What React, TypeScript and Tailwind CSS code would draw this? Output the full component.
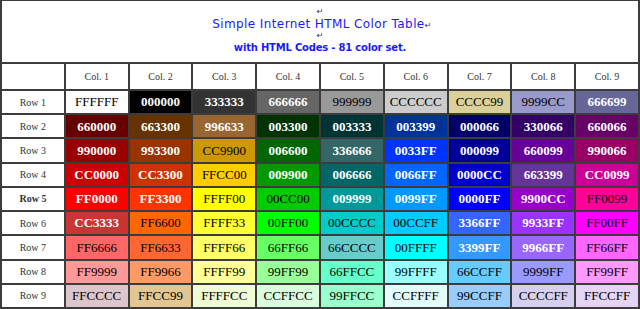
import React from 'react'

// 81 web colours, row by row; the flag marks cells that carry white text
const ROWS: [string, boolean][][] = [
  [['FFFFFF', false], ['000000', true], ['333333', true], ['666666', true], ['999999', false], ['CCCCCC', false], ['CCCC99', false], ['9999CC', false], ['666699', true]],
  [['660000', true], ['663300', true], ['996633', true], ['003300', true], ['003333', true], ['003399', true], ['000066', true], ['330066', true], ['660066', true]],
  [['990000', true], ['993300', true], ['CC9900', false], ['006600', true], ['336666', true], ['0033FF', true], ['000099', true], ['660099', true], ['990066', true]],
  [['CC0000', true], ['CC3300', true], ['FFCC00', false], ['009900', true], ['006666', true], ['0066FF', true], ['0000CC', true], ['663399', true], ['CC0099', true]],
  [['FF0000', true], ['FF3300', true], ['FFFF00', false], ['00CC00', false], ['009999', true], ['0099FF', true], ['0000FF', true], ['9900CC', true], ['FF0099', false]],
  [['CC3333', true], ['FF6600', false], ['FFFF33', false], ['00FF00', false], ['00CCCC', false], ['00CCFF', false], ['3366FF', true], ['9933FF', true], ['FF00FF', false]],
  [['FF6666', false], ['FF6633', false], ['FFFF66', false], ['66FF66', false], ['66CCCC', false], ['00FFFF', false], ['3399FF', true], ['9966FF', true], ['FF66FF', false]],
  [['FF9999', false], ['FF9966', false], ['FFFF99', false], ['99FF99', false], ['66FFCC', false], ['99FFFF', false], ['66CCFF', false], ['9999FF', false], ['FF99FF', false]],
  [['FFCCCC', false], ['FFCC99', false], ['FFFFCC', false], ['CCFFCC', false], ['99FFCC', false], ['CCFFFF', false], ['99CCFF', false], ['CCCCFF', false], ['FFCCFF', false]],
]

// the screenshot's palette shifts a few pale tones
const SHOWN: Record<string, string> = {
  CCCC99: '#dbd09a',
  FFCCCC: '#dcc6cb',
  FFCC99: '#e3c792',
  FFFFCC: '#effcd5',
  CCFFCC: '#dcfce0',
  CCFFFF: '#e2fcfc',
  CCCCFF: '#d6d0ee',
  FFCCFF: '#e6d4f4',
}

const serif = "font-['Liberation_Serif',serif]"

function Mark() {
  return <span className="text-[8px] leading-none text-[#333]">↵</span>
}

export default function App() {
  return (
    <div className="w-[640px] h-[309px] bg-[#3c3c3c] pt-px px-[2px] pb-[2px] flex flex-col gap-[2px] overflow-hidden">
      <div className="h-[61px] bg-white flex flex-col items-center justify-center font-['DejaVu_Sans',sans-serif] text-[#1a1aff]">
        <Mark />
        <p className="text-[12px] leading-[15px] tracking-[0.4px] mt-[1px] ml-[4px]">
          Simple Internet HTML Color Table<Mark />
        </p>
        <Mark />
        <p className="text-[10px] leading-[14px] font-semibold tracking-[-0.2px] mt-[1px]">with HTML Codes - 81 color set.</p>
      </div>

      <div className={`flex-1 grid grid-cols-10 grid-rows-[25px_repeat(9,1fr)] gap-[2px] ${serif}`}>
        <div className="bg-white" />
        {Array.from({ length: 9 }, (_, i) => (
          <div key={i} className="bg-white flex items-center justify-center text-[10px] text-[#333]">
            Col. {i + 1}
          </div>
        ))}
        {ROWS.map((row, r) => (
          <React.Fragment key={r}>
            <div
              className={`bg-white flex items-center justify-center text-[10px] text-[#333] ${r === 4 ? 'font-bold' : ''}`}
            >
              Row {r + 1}
            </div>
            {row.map(([hex, light]) => (
              <div
                key={hex}
                className={`flex items-center justify-center text-[13px] ${light ? 'text-white font-bold' : 'text-black'}`}
                style={{ backgroundColor: SHOWN[hex] ?? `#${hex}` }}
              >
                {hex}
              </div>
            ))}
          </React.Fragment>
        ))}
      </div>
    </div>
  )
}
